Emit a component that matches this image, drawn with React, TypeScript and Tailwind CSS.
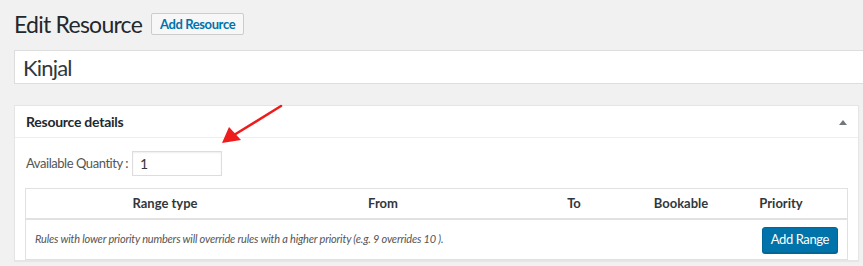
import React from "react";

export default function App() {
  const font = { fontFamily: "Lato, 'Open Sans', sans-serif" };
  return (
    <div className="relative w-[863px] h-[266px] overflow-hidden bg-[#f1f1f1] text-[#444]" style={font}>
      <div className="pl-[14px]">
        <div className="flex items-center h-[50px] pb-[2px]">
          <h1 className="text-[23px] text-[#23282d] leading-none tracking-[-0.75px]">Edit Resource</h1>
          <button className="ml-[9px] h-[22px] px-[8px] border border-[#cccccc] bg-[#f7f7f7] rounded-[2px] text-[13px] font-bold text-[#0073aa] leading-none tracking-[-0.4px]">
            Add Resource
          </button>
        </div>
        <div className="h-[34px] bg-white border border-[#dddddd] flex items-center pl-[8px] text-[22px] text-[#32373c] mr-[-10px] tracking-[-0.8px]">
          Kinjal
        </div>
        <div className="mt-[21px] w-[845px] bg-white border border-[#e5e5e5] shadow-[0_1px_1px_rgba(0,0,0,0.04)]">
          <div className="h-[32px] flex items-center justify-between pl-[11px] pr-[10px] border-b border-[#eeeeee]">
            <span className="text-[14px] font-bold text-[#23282d] tracking-[-0.25px]">Resource details</span>
            <svg width="10" height="8" viewBox="0 0 10 8"><path d="M1 7 L5 2 L9 7 Z" fill="#72777c" /></svg>
          </div>
          <div className="px-[10px] pt-[13px]">
            <div className="flex items-center">
              <span className="text-[13px] text-[#555] ml-[1px] tracking-[-0.45px]">Available Quantity :</span>
              <div className="ml-[4px] w-[90px] h-[25px] border border-[#dddddd] shadow-[inset_0_1px_2px_rgba(0,0,0,0.07)] flex items-center pl-[7px] text-[14px] text-[#32373c]">1</div>
            </div>
            <div className="mt-[12px] border border-[#e1e1e1]">
              <div className="flex h-[31px] items-center border-b-2 border-[#e1e1e1] text-[13px] font-bold text-[#32373c]">
                <div className="w-[278px] text-center">Range type</div>
                <div className="w-[158px] text-center">From</div>
                <div className="w-[72px]" />
                <div className="w-[80px] text-center">To</div>
                <div className="w-[7px]" />
                <div className="w-[120px] text-center">Bookable</div>
                <div className="w-[80px] text-center">Priority</div>
              </div>
              <div className="h-[39px] flex items-center justify-between pl-[9px] pr-[9px]">
                <span className="text-[11px] italic text-[#555] tracking-[-0.2px]">Rules with lower priority numbers will override rules with a higher priority (e.g. 9 overrides 10 ).</span>
                <button className="h-[26px] px-[8px] bg-[#0073aa] border border-[#006799] rounded-[3px] text-white text-[13px] tracking-[-0.4px] shadow-[0_1px_0_#006799]">Add Range</button>
              </div>
            </div>
          </div>
        </div>
      </div>
      <svg className="absolute left-0 top-0 pointer-events-none" width="863" height="266">
        <line x1="281" y1="106" x2="234" y2="135" stroke="#ee1c1c" strokeWidth="2.5" strokeLinecap="round" />
        <path d="M222 143 L229 127 L241 140 Z" fill="#ee1c1c" />
      </svg>
    </div>
  );
}
